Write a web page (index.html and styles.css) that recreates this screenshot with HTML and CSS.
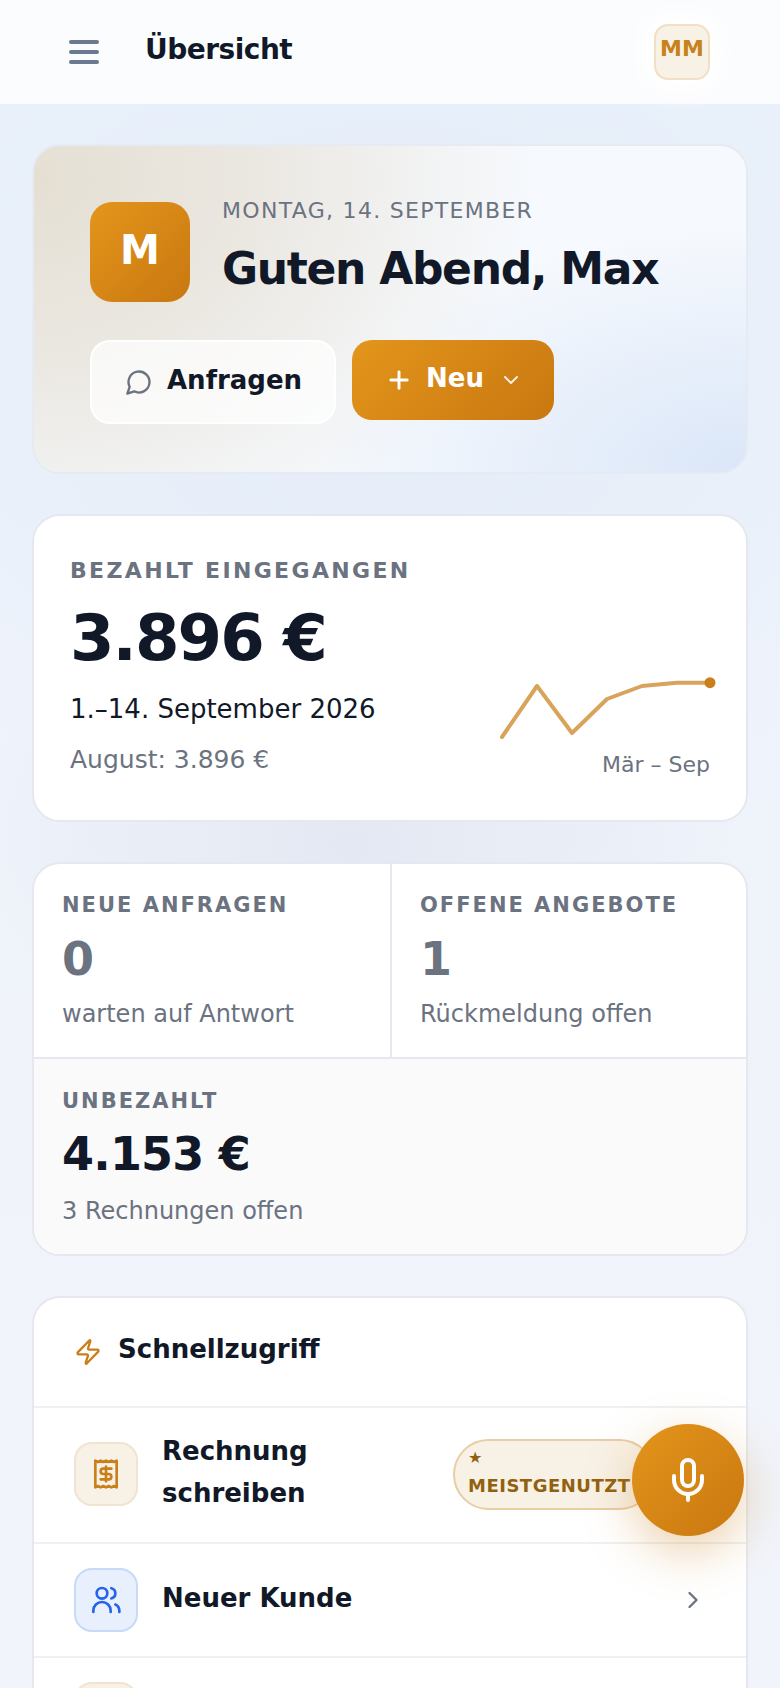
FILE: index.html
```html
<!DOCTYPE html>
<html lang="de">
<head>
    <meta charset="UTF-8">
    <meta name="viewport" content="width=device-width, initial-scale=1.0">
    <title>Übersicht</title>
    <link rel="stylesheet" href="styles.css">
</head>
<body>
    <header class="topbar">
        <button class="menu-btn" type="button" aria-label="Menü">
            <span></span><span></span><span></span>
        </button>
        <h1 class="topbar-title">Übersicht</h1>
        <div class="topbar-avatar">MM</div>
    </header>

    <main class="page">
        <!-- Begruessung -->
        <section class="hero">
            <div class="hero-top">
                <div class="hero-avatar">M</div>
                <div>
                    <p class="hero-date">MONTAG, 14. SEPTEMBER</p>
                    <h2 class="hero-title">Guten Abend, Max</h2>
                </div>
            </div>
            <div class="hero-actions">
                <button class="btn btn-light" type="button">
                    <svg class="icon-chat" viewBox="0 0 24 24"><path d="M7.9 20A9 9 0 1 0 4 16.1L2 22Z"/></svg>
                    <span>Anfragen</span>
                </button>
                <button class="btn btn-primary" type="button">
                    <svg class="icon-plus" viewBox="0 0 24 24"><path d="M5 12h14"/><path d="M12 5v14"/></svg>
                    <span>Neu</span>
                    <svg class="icon-down" viewBox="0 0 24 24"><path d="m6 9 6 6 6-6"/></svg>
                </button>
            </div>
        </section>

        <!-- Umsatz -->
        <section class="card revenue">
            <div>
                <p class="label">BEZAHLT EINGEGANGEN</p>
                <p class="revenue-amount">3.896 €</p>
                <p class="revenue-range">1.–14. September 2026</p>
                <p class="revenue-prev">August: 3.896 €</p>
            </div>
            <div class="spark">
                <svg class="spark-chart" viewBox="0 0 216 64">
                    <polyline points="3,58 38,7 73,54 108,20 143,7 178,3.7 211,3.7"/>
                    <circle cx="211" cy="3.7" r="5.5"/>
                </svg>
                <span class="spark-label">Mär – Sep</span>
            </div>
        </section>

        <!-- Kennzahlen -->
        <section class="card stats">
            <div class="stat stat-left">
                <p class="label stat-label">NEUE ANFRAGEN</p>
                <p class="stat-value">0</p>
                <p class="stat-note">warten auf Antwort</p>
            </div>
            <div class="stat">
                <p class="label stat-label">OFFENE ANGEBOTE</p>
                <p class="stat-value">1</p>
                <p class="stat-note">Rückmeldung offen</p>
            </div>
            <div class="stat stat-wide">
                <p class="label stat-label">UNBEZAHLT</p>
                <p class="stat-value stat-value-dark">4.153 €</p>
                <p class="stat-note">3 Rechnungen offen</p>
            </div>
        </section>

        <!-- Schnellzugriff -->
        <section class="card quick">
            <div class="quick-head">
                <svg class="icon-zap" viewBox="0 0 24 24"><path d="M4 14a1 1 0 0 1-.78-1.63l9.9-10.2a.5.5 0 0 1 .86.46l-1.92 6.02A1 1 0 0 0 13 10h7a1 1 0 0 1 .78 1.63l-9.9 10.2a.5.5 0 0 1-.86-.46l1.92-6.02A1 1 0 0 0 11 14z"/></svg>
                <h3 class="quick-title">Schnellzugriff</h3>
            </div>
            <div class="quick-row quick-row-tall">
                <div class="quick-icon quick-icon-amber">
                    <svg viewBox="0 0 24 24"><path d="M4 2v20l2-1 2 1 2-1 2 1 2-1 2 1 2-1 2 1V2l-2 1-2-1-2 1-2-1-2 1-2-1-2 1Z"/><path d="M16 8h-6a2 2 0 1 0 0 4h4a2 2 0 1 1 0 4H8"/><path d="M12 17.5v-11"/></svg>
                </div>
                <span class="quick-name">Rechnung schreiben</span>
                <span class="pill"><span class="pill-star">★</span><span class="pill-text">MEISTGENUTZT</span></span>
                <svg class="icon-next" viewBox="0 0 24 24"><path d="m9 18 6-6-6-6"/></svg>
            </div>
            <div class="quick-row">
                <div class="quick-icon quick-icon-blue">
                    <svg viewBox="0 0 24 24"><circle cx="9" cy="7" r="4"/><path d="M2.5 21v-1a6.5 6.5 0 0 1 13 0v1"/><path d="M16 3.13a4 4 0 0 1 0 7.75"/><path d="M22 21v-1a5 5 0 0 0-3-4.6"/></svg>
                </div>
                <span class="quick-name">Neuer Kunde</span>
                <svg class="icon-next" viewBox="0 0 24 24"><path d="m9 18 6-6-6-6"/></svg>
            </div>
            <div class="quick-row">
                <div class="quick-icon quick-icon-amber"></div>
            </div>
        </section>
    </main>

    <button class="fab" type="button" aria-label="Spracheingabe">
        <svg viewBox="0 0 24 24"><path d="M12 2a3 3 0 0 0-3 3v7a3 3 0 0 0 6 0V5a3 3 0 0 0-3-3Z"/><path d="M19 10v2a7 7 0 0 1-14 0v-2"/><path d="M12 19v3"/></svg>
    </button>
</body>
</html>
```

FILE: styles.css
```css
* {
    box-sizing: border-box;
}

html, body {
    height: 1688px;
    overflow: hidden;
}

body {
    margin: 0;
    font-family: "DejaVu Sans", sans-serif;
    color: #111827;
    background-color: #f1f4fa;
    background-image:
        radial-gradient(50% 14% at 45% 50%, #e3e8f2 0%, rgba(227, 232, 242, 0) 100%),
        radial-gradient(75% 28% at 50% 22%, #e4ecf8 0%, rgba(228, 236, 248, 0) 100%),
        linear-gradient(180deg, #e9f1fb 0%, #eef3fb 40%, #f0f3f9 70%, #f1f4fa 100%);
}

p, h1, h2, h3 {
    margin: 0;
}

svg {
    fill: none;
    stroke: currentColor;
    stroke-width: 2;
    stroke-linecap: round;
    stroke-linejoin: round;
    flex: none;
}

button {
    font-family: inherit;
    border: none;
    cursor: pointer;
}

/* Kopfzeile */
.topbar {
    height: 104px;
    display: flex;
    align-items: center;
    padding: 0 70px 0 69px;
    background-color: #fbfcfe;
}

.menu-btn {
    width: 30px;
    padding: 0;
    display: flex;
    flex-direction: column;
    gap: 6px;
    background: none;
}

.menu-btn span {
    height: 4px;
    border-radius: 2px;
    background-color: #6b7a90;
}

.topbar-title {
    margin: 0 auto 5px 46px;
    font-size: 28px;
    line-height: 32px;
    letter-spacing: -0.5px;
    font-weight: 700;
}

.topbar-avatar {
    width: 56px;
    height: 56px;
    padding-bottom: 8px;
    display: flex;
    align-items: center;
    justify-content: center;
    border: 2px solid #f1dfc6;
    border-radius: 14px;
    background-color: #f8f1e6;
    color: #c8821a;
    font-size: 22px;
    font-weight: 700;
    box-shadow: 0 0 24px 12px #ffffff;
}

/* Seite */
.page {
    padding: 40px 32px 0;
    display: flex;
    flex-direction: column;
    gap: 40px;
}

.card {
    border: 2px solid #e5e8ef;
    border-radius: 28px;
    background-color: #ffffff;
    overflow: hidden;
}

.label {
    font-size: 22px;
    line-height: 26px;
    font-weight: 700;
    letter-spacing: 2.35px;
    color: #6b7280;
}

/* Begruessung */
.hero {
    padding: 56px 56px 48px;
    border: 2px solid #e6ebf3;
    border-radius: 28px;
    background-color: #f6f9fd;
    background-image:
        radial-gradient(60% 75% at 100% 100%, #dae6f8 0%, rgba(218, 230, 248, 0) 100%),
        radial-gradient(70% 125% at 0% 10%, #e5dfd3 0%, #ebe8e2 45%, rgba(240, 240, 238, 0) 100%);
}

.hero-top {
    display: flex;
    gap: 32px;
}

.hero-avatar {
    width: 100px;
    height: 100px;
    padding-bottom: 4px;
    display: flex;
    align-items: center;
    justify-content: center;
    border-radius: 22px;
    background-image: linear-gradient(135deg, #e4951b, #c87810);
    color: #ffffff;
    font-size: 40px;
    font-weight: 700;
}

.hero-date {
    font-size: 22px;
    line-height: 18px;
    letter-spacing: 1.3px;
    color: #6b7280;
}

.hero-title {
    margin-top: 23px;
    font-size: 44px;
    line-height: 52px;
    letter-spacing: -1.3px;
    font-weight: 700;
}

.hero-actions {
    margin-top: 38px;
    display: flex;
    align-items: flex-start;
    gap: 16px;
}

.btn {
    display: flex;
    align-items: center;
    border-radius: 20px;
    font-size: 26px;
    font-weight: 700;
}

.btn-light {
    width: 246px;
    height: 84px;
    padding: 0 0 0 33px;
    gap: 14px;
    border: 2px solid #ffffff;
    background-color: rgba(255, 255, 255, 0.7);
    color: #111827;
}

.btn-light span {
    margin-bottom: 5px;
}

.btn-primary {
    width: 202px;
    height: 80px;
    padding: 0 0 0 33px;
    gap: 13px;
    background-image: linear-gradient(135deg, #e4951b, #c87810);
    color: #ffffff;
}

.btn-primary span {
    margin-bottom: 4px;
}

.icon-chat {
    width: 28px;
    height: 28px;
    color: #6b7280;
}

.icon-plus {
    width: 28px;
    height: 28px;
    stroke-width: 2.5;
}

.icon-down {
    width: 24px;
    height: 24px;
    margin-left: 2px;
    opacity: 0.85;
}

/* Umsatz */
.revenue {
    height: 308px;
    padding: 42px 36px 0;
    display: flex;
    justify-content: space-between;
}

.revenue-amount {
    margin-top: 15px;
    font-size: 64px;
    line-height: 78px;
    letter-spacing: -1.92px;
    font-weight: 700;
}

.revenue-range {
    margin-top: 16px;
    font-size: 26px;
    line-height: 32px;
}

.revenue-prev {
    margin-top: 19px;
    font-size: 25px;
    line-height: 32px;
    color: #6b7280;
}

.spark {
    margin-top: 121px;
    display: flex;
    flex-direction: column;
    align-items: flex-end;
}

.spark-chart {
    width: 216px;
    height: 64px;
    margin-right: -5px;
    overflow: visible;
    color: #c97f1a;
}

.spark-chart polyline {
    stroke-width: 4;
    opacity: 0.72;
}

.spark-chart circle {
    fill: currentColor;
    stroke: none;
}

.spark-label {
    margin-top: 9px;
    font-size: 22px;
    line-height: 26px;
    color: #6b7280;
}

/* Kennzahlen */
.stats {
    display: grid;
    grid-template-columns: 358px 1fr;
}

.stat {
    height: 195px;
    padding: 28px 28px 0;
    border-bottom: 2px solid #e5e8ef;
}

.stat-left {
    border-right: 2px solid #e5e8ef;
}

.stat-wide {
    grid-column: 1 / -1;
    height: 195px;
    padding-top: 29px;
    border-bottom: none;
    background-color: #fafafb;
}

.stat-label {
    font-size: 21px;
    letter-spacing: 2px;
}

.stat-value {
    margin-top: 13px;
    font-size: 46px;
    line-height: 56px;
    letter-spacing: -0.8px;
    font-weight: 700;
    color: #6b7280;
}

.stat-value-dark {
    margin-top: 12px;
    color: #111827;
}

.stat-note {
    margin-top: 12px;
    font-size: 24px;
    line-height: 30px;
    color: #6b7280;
}

.stat-wide .stat-note {
    margin-top: 14px;
}

/* Schnellzugriff */
.quick-head {
    height: 108px;
    padding: 0 40px 6px;
    display: flex;
    align-items: center;
    gap: 16px;
}

.icon-zap {
    width: 28px;
    height: 28px;
    margin-top: 6px;
    color: #c97f1a;
}

.quick-title {
    font-size: 26px;
    line-height: 32px;
    font-weight: 700;
}

.quick-row {
    padding: 24px 39px 24px 40px;
    display: flex;
    align-items: center;
    gap: 24px;
    border-top: 2px solid #eff0f3;
}

.quick-row-tall {
    padding-bottom: 26px;
}

.quick-icon {
    width: 64px;
    height: 64px;
    display: flex;
    align-items: center;
    justify-content: center;
    border-radius: 18px;
    border: 2px solid transparent;
    flex: none;
}

.quick-icon svg {
    width: 32px;
    height: 32px;
}

.quick-icon-amber {
    background-color: #f8f1e6;
    border-color: #f1e3cf;
    color: #c97f1a;
}

.quick-icon-blue {
    background-color: #e8f0fe;
    border-color: #c9d9f8;
    color: #2563eb;
}

.quick-name {
    flex: 1;
    min-width: 0;
    margin: -2px 0 2px;
    font-size: 26px;
    line-height: 42px;
    font-weight: 700;
}

.pill {
    flex: none;
    width: 202px;
    padding: 6px 10px 8px 13px;
    display: flex;
    flex-direction: column;
    border: 2px solid #e8cda6;
    border-radius: 36px;
    background-color: #f8f1e6;
    color: #92610f;
    font-weight: 700;
}

.pill-star {
    font-size: 16px;
    line-height: 22px;
}

.pill-text {
    margin-top: 2px;
    font-size: 18px;
    line-height: 29px;
    letter-spacing: 0.5px;
}

.icon-next {
    width: 28px;
    height: 28px;
    color: #6b7280;
}

/* Sprachknopf */
.fab {
    position: fixed;
    right: 36px;
    bottom: 152px;
    width: 112px;
    height: 112px;
    padding: 0;
    display: flex;
    align-items: center;
    justify-content: center;
    border-radius: 50%;
    background-image: linear-gradient(135deg, #e4951b, #c87810);
    color: #ffffff;
    box-shadow: 0 16px 48px rgba(201, 127, 26, 0.35);
}

.fab svg {
    width: 48px;
    height: 48px;
}
```
